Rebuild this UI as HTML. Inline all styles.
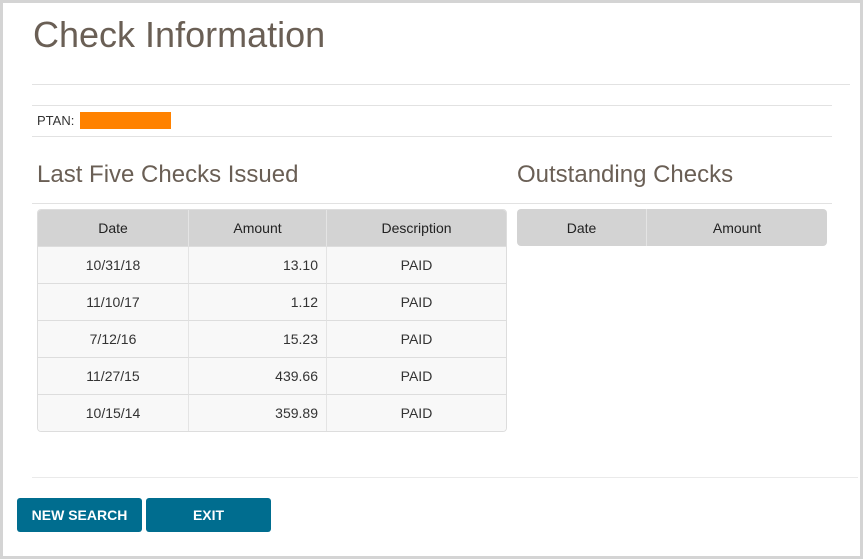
<!DOCTYPE html><html><head><style>
body{margin:0;width:863px;height:559px;position:relative;font-family:"Liberation Sans",Arial,sans-serif;background:#fff;overflow:hidden}
.frame{position:absolute;left:0;top:0;width:857px;height:553px;border:3px solid #d4d4d4}
.a{position:absolute}
.hl{position:absolute;height:1px;background:#e2e2e2}
h1,h2{margin:0;font-weight:normal;color:#6a5f55;position:absolute;white-space:nowrap}
table{position:absolute;border-collapse:separate;border-spacing:0;font-size:14px;color:#333;border:1px solid #ddd;border-radius:4px;overflow:hidden}
th{background:#d3d3d3;font-weight:normal;height:36px;padding:0;color:#222}
td{height:36px;padding:0;text-align:center;background:#f8f8f8;border-top:1px solid #ddd}
th+th,td+td{border-left:1px solid #e4e4e4}
td.r{text-align:right;padding-right:8px}
.btn{position:absolute;top:498px;height:34px;background:#006d8f;color:#fff;font-weight:bold;font-size:14px;line-height:34px;text-align:center;border-radius:3px}
</style></head><body>
<div class="frame"></div>
<h1 style="left:33px;top:14px;font-size:36px">Check Information</h1>
<div class="hl" style="left:32px;top:84px;width:818px"></div>
<div class="hl" style="left:32px;top:105px;width:800px"></div>
<div class="a" style="left:37px;top:113px;font-size:13px;color:#333">PTAN:</div>
<div class="a" style="left:80px;top:112px;width:91px;height:17px;background:#ff8200"></div>
<div class="hl" style="left:32px;top:136px;width:800px"></div>
<h2 style="left:37px;top:161px;font-size:24px">Last Five Checks Issued</h2>
<h2 style="left:517px;top:161px;font-size:24px">Outstanding Checks</h2>
<div class="hl" style="left:32px;top:203px;width:800px"></div>
<table style="left:37px;top:209px;width:470px">
<tr><th style="width:150px">Date</th><th style="width:137px">Amount</th><th>Description</th></tr>
<tr><td>10/31/18</td><td class="r">13.10</td><td>PAID</td></tr>
<tr><td>11/10/17</td><td class="r">1.12</td><td>PAID</td></tr>
<tr><td>7/12/16</td><td class="r">15.23</td><td>PAID</td></tr>
<tr><td>11/27/15</td><td class="r">439.66</td><td>PAID</td></tr>
<tr><td>10/15/14</td><td class="r">359.89</td><td>PAID</td></tr>
</table>
<table style="left:517px;top:209px;width:310px;border:none">
<tr><th style="width:129px;height:37px">Date</th><th style="height:37px">Amount</th></tr>
</table>
<div class="hl" style="left:32px;top:477px;width:826px;background:#eaeaea"></div>
<div class="btn" style="left:17px;width:125px">NEW SEARCH</div>
<div class="btn" style="left:146px;width:125px">EXIT</div>
</body></html>
